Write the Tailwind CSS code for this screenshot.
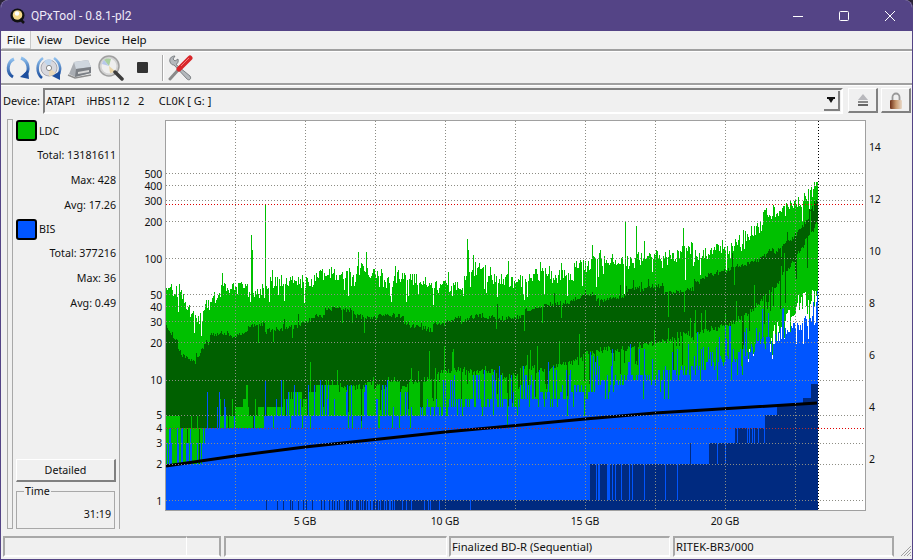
<!DOCTYPE html>
<html lang="en">
  <head>
    <meta charset="UTF-8" />
    <meta name="viewport" content="width=device-width, initial-scale=1.0" />
    <title>QPxTool</title>
    <script src="https://cdn.jsdelivr.net/npm/@tailwindcss/browser@4"></script>
  </head>
  <body class="bg-[#2b2438] overflow-hidden">
    <div class="w-[913px] h-[560px] flex flex-col bg-[#f0f0f0] rounded-t-lg overflow-hidden border-x border-b border-[#544486] font-['Noto_Sans',sans-serif] text-[11px] text-[#111] leading-none">
      <!-- title bar -->
      <div class="h-[31px] -mx-px shrink-0 bg-[#544486] flex items-center text-white">
        <svg class="ml-[10px] w-4 h-4" viewBox="0 0 16 16">
          <circle cx="7.500" cy="7.500" r="7" fill="#111" />
          <circle cx="7.500" cy="7" r="4.800" fill="#f6d98a" />
          <circle cx="7" cy="5.500" r="2.200" fill="#fff" />
          <path d="M10 11 L14 15" stroke="#111" stroke-width="2.500" />
        </svg>
        <span class="ml-[5px] text-[12px] font-['Roboto',sans-serif] text-[#efeaf7]">QPxTool - 0.8.1-pl2</span>
        <div class="ml-auto flex items-center">
          <svg class="w-3 h-3 mr-[33px]" viewBox="0 0 12 12"><path d="M0 6.500H10" stroke="#fff" /></svg>
          <svg class="w-3 h-3 mr-[34px]" viewBox="0 0 12 12"><rect x="1.500" y="1.500" width="9" height="9" rx="1" fill="none" stroke="#fff" /></svg>
          <svg class="w-3 h-3 mr-[17px]" viewBox="0 0 12 12"><path d="M1 1L11 11M11 1L1 11" stroke="#fff" /></svg>
        </div>
      </div>

      <!-- menu -->
      <div class="h-[20px] shrink-0 flex items-center border-b-2 border-[#a0a0a0] pl-px text-[11.500px]">
        <span class="h-[18px] w-[29px] flex items-center justify-center bg-[#f6f6f6] border-r border-b border-[#c8c8c8]">File</span>
        <span class="ml-[6px]">View</span>
        <span class="ml-[12px]">Device</span>
        <span class="ml-[12px]">Help</span>
      </div>

      <!-- toolbar -->
      <div class="h-[34px] shrink-0 flex items-center border-t border-white border-b-2 border-b-[#a0a0a0] pl-[4px]">
        <svg class="w-[26px] h-[26px]" viewBox="0 0 26 26">
          <defs>
            <linearGradient id="arc" x1="0" y1="0" x2="0" y2="1"><stop offset="0" stop-color="#8fc0ee" /><stop offset="1" stop-color="#1d4f9e" /></linearGradient>
          </defs>
          <path d="M9 4 C2 7 1 18 8 22" fill="none" stroke="url(#arc)" stroke-width="3" />
          <path d="M16 3 C24 6 25 16 20 20" fill="none" stroke="url(#arc)" stroke-width="3" />
          <path d="M15 22 L24 24 L23 15Z" fill="#1d4f9e" />
        </svg>
        <svg class="ml-[5px] w-[26px] h-[26px]" viewBox="0 0 26 26">
          <circle cx="13" cy="13" r="8" fill="#d8d8de" stroke="#a8a8b0" />
          <path d="M13 13L8 6A8 8 0 0 1 16 5Z" fill="#bfd6ee" />
          <path d="M13 13L20 18A8 8 0 0 1 13 21Z" fill="#e8d8b8" />
          <circle cx="13" cy="13" r="2.600" fill="#fff" stroke="#888" />
          <path d="M7 3 C0 8 0 18 6 23" fill="none" stroke="url(#arc)" stroke-width="2.600" />
          <path d="M18 3 C25 8 26 16 21 22" fill="none" stroke="url(#arc)" stroke-width="2.600" />
          <path d="M16 21 L24 25 L24 16Z" fill="#1d4f9e" />
        </svg>
        <svg class="ml-[5px] w-[26px] h-[26px]" viewBox="0 0 26 26">
          <path d="M2 19 L7 7 L21 5 L24 12 L24 18 L8 22Z" fill="#a9adb3" />
          <path d="M7 7 L21 5 L24 12 L9 14Z" fill="#cfd6de" />
          <path d="M9 14 L24 12 L24 18 L8 22Z" fill="#7a7e84" />
          <path d="M11 17 L22 15 L22 17 L11 19Z" fill="#d8d8d8" />
          <path d="M1 20 L8 23 L24 20" fill="none" stroke="#8d8d8d" stroke-width="1.500" />
        </svg>
        <svg class="ml-[5px] w-[26px] h-[26px]" viewBox="0 0 26 26">
          <circle cx="11" cy="11" r="10" fill="#d2d2d2" stroke="#a0a0a0" stroke-width="1.500" />
          <circle cx="11" cy="11" r="7.500" fill="#eeeeee" />
          <path d="M11 11L6 5A8 8 0 0 1 13 4Z" fill="#a9cf9f" />
          <path d="M11 11L4 9A8 8 0 0 1 6 5Z" fill="#b7c7ea" />
          <path d="M11 11L17 16A8 8 0 0 1 12 18Z" fill="#ead6a8" />
          <path d="M17 17L24 24" stroke="#3c3c3c" stroke-width="3.500" stroke-linecap="round" />
        </svg>
        <div class="ml-[13px] w-[11px] h-[11px] bg-[#333] rounded-[1px]"></div>
        <div class="ml-[14px] w-[2px] h-[26px] bg-[#a8a8a8] border-r border-white"></div>
        <svg class="ml-[3px] w-[26px] h-[26px]" viewBox="0 0 26 26">
          <path d="M3 7 C2 4 4 1 8 1 L6 4 L8 6 L11 4 C12 7 10 9 9 9.500 L23 21 C25 24 22 26 20 24 L7 10 C5 10 4 9 3 7Z" fill="#b4b8bc" stroke="#6a6e72" stroke-width="0.800" />
          <path d="M3 24 L12 14" stroke="#8a8a8a" stroke-width="3" stroke-linecap="round" />
          <path d="M12 14 L23 3" stroke="#d8262a" stroke-width="5" stroke-linecap="round" />
          <path d="M14 11 L22 3" stroke="#f47a7a" stroke-width="1" />
        </svg>
      </div>

      <!-- device row -->
      <div class="h-[33px] shrink-0 flex items-center border-t border-white pl-[2px] pb-[3px]">
        <span class="w-[40px]">Device:</span>
        <div class="w-[800px] h-[26px] flex items-center bg-[#f0f0f0] border-2 border-t-[#808080] border-l-[#808080] border-r-white border-b-white pl-[1px]">
          <span class="whitespace-pre">ATAPI    iHBS112   2     CL0K [ G: ]</span>
          <div class="ml-auto mr-px w-[16px] h-[20px] flex items-center justify-center bg-[#f0f0f0] border-r-2 border-b-2 border-[#808080]">
            <svg class="w-2 h-2" viewBox="0 0 8 8"><path d="M0 1H8V3H6.500L4 7L1.500 3H0Z" fill="#111" /></svg>
          </div>
        </div>
        <div class="ml-[5px] w-[30px] h-[25px] flex items-center justify-center bg-[#f0f0f0] border-t border-l border-white border-r-2 border-b-2 border-r-[#808080] border-b-[#808080]">
          <svg class="w-[12px] h-[14px]" viewBox="0 0 12 14"><path d="M6 1L11 7H1Z" fill="#b8b8bc" /><rect x="1" y="8" width="10" height="2" fill="#888" /><rect x="1" y="11" width="10" height="2" fill="#666" /></svg>
        </div>
        <div class="ml-[3px] w-[30px] h-[25px] flex items-center justify-center bg-[#f0f0f0] border-t border-l border-white border-r-2 border-b-2 border-r-[#808080] border-b-[#808080]">
          <svg class="w-[14px] h-[17px]" viewBox="0 0 14 17">
            <defs><linearGradient id="lock" x1="0" y1="0" x2="1" y2="0"><stop offset="0" stop-color="#6e3018" /><stop offset="0.500" stop-color="#c99a70" /><stop offset="1" stop-color="#e8d8c8" /></linearGradient></defs>
            <path d="M3.500 8V5A3.500 3.500 0 0 1 10.500 5V8" fill="none" stroke="#999" stroke-width="1.800" />
            <rect x="1" y="8" width="12" height="9" rx="1" fill="url(#lock)" />
          </svg>
        </div>
      </div>

      <!-- main -->
      <div class="flex-1 flex min-h-0 pt-[1px]">
        <div class="ml-[6px] mb-[7px] w-[6px] shrink-0 border-l border-b border-r border-[#a8a8a8] border-t"></div>
        <div class="mb-[7px] w-[107px] shrink-0 border-r border-[#a8a8a8] flex flex-col relative text-[10.700px]">
          <div class="h-[22px] ml-[3px] flex items-center gap-[2px]">
            <div class="w-[21px] h-[21px] rounded-[3px] border-2 border-black bg-[#00c000]"></div>
            <span class="mt-[2px]">LDC</span>
          </div>
          <div class="flex flex-col items-end pr-[3px]">
            <div class="h-[25px] mt-[2px] flex items-center">Total: 13181611</div>
            <div class="h-[25px] flex items-center">Max: 428</div>
            <div class="h-[25px] flex items-center">Avg: 17.26</div>
          </div>
          <div class="h-[22px] ml-[3px] flex items-center gap-[2px]">
            <div class="w-[21px] h-[21px] rounded-[3px] border-2 border-black bg-[#0055ff]"></div>
            <span>BIS</span>
          </div>
          <div class="flex flex-col items-end pr-[3px]">
            <div class="h-[25px] mt-[1px] flex items-center">Total: 377216</div>
            <div class="h-[25px] flex items-center">Max: 36</div>
            <div class="h-[25px] flex items-center">Avg: 0.49</div>
          </div>
          <div class="mt-auto ml-[3px] w-[100px] h-[23px] flex items-center justify-center border-t border-l border-white border-r-2 border-b-2 border-r-[#808080] border-b-[#808080]">Detailed</div>
          <div class="relative mt-[9px] ml-[3px] w-[99px] h-[38px] border border-[#a8a8a8] flex items-end justify-end pr-[3px] pb-[8px]">
            <span class="absolute left-[7px] -top-[6px] px-[1px] bg-[#f0f0f0]">Time</span>
            <span>31:19</span>
          </div>
        </div>
        <svg id="chart" class="shrink-0 -mt-[1px]" width="793" height="418" viewBox="120 118 793 418" shape-rendering="crispEdges"></svg>
      </div>

      <!-- status bar -->
      <div class="h-[21px] shrink-0 flex mb-[2px] ml-[2px] gap-[2px] relative text-[11.200px]">
        <div class="w-[184px] border-t-2 border-l-2 border-[#a8a8a8] border-r border-r-white border-b-2 border-b-white"></div>
        <div class="w-[34px] -ml-[2px] border-t-2 border-r-2 border-[#a8a8a8] border-b-2 border-b-white"></div>
        <div class="ml-[1px] w-[223px] border-t-2 border-l-2 border-r border-[#a8a8a8] border-r-white border-b-2 border-b-white"></div>
        <div class="w-[221px] flex items-center pl-[1px] border-t-2 border-l-2 border-r border-[#a8a8a8] border-r-white border-b-2 border-b-white">Finalized BD-R (Sequential)</div>
        <div class="ml-[1px] w-[221px] flex items-center pl-[1px] border-t-2 border-l-2 border-r-2 border-[#a8a8a8] border-b-2 border-b-white">RITEK-BR3/000</div>
        <svg class="absolute right-0 bottom-0 w-[14px] h-[14px]" viewBox="0 0 14 14"><path d="M13 3L3 13M13 6L6 13M13 9L9 13M13 12L12 13" stroke="#a0a0a0" /></svg>
      </div>
    </div>

    <script>
      const chart = document.getElementById("chart");
      const PLOT_L = 166, PLOT_R = 817;

      // small seeded generator so the trace is the same on every load
      let seed = 20731;
      function rnd() {
        seed = (seed * 16807) % 2147483647;
        return seed / 2147483647;
      }

      function lerp(pts, x) {
        for (let i = 1; i < pts.length; i++) {
          if (x <= pts[i][0]) {
            const t = (x - pts[i - 1][0]) / (pts[i][0] - pts[i - 1][0]);
            return pts[i - 1][1] + t * (pts[i][1] - pts[i - 1][1]);
          }
        }
        return pts[pts.length - 1][1];
      }

      // log scale of the LDC axis: y = 500 - 120 * log10(count)
      const toValue = (y) => Math.pow(10, (500 - y) / 120);
      const toY = (v) => (v < 1 ? 510 : Math.round(500 - 120 * Math.log10(v)));

      // noise that holds its value over a run of columns
      function blockNoise(minRun, maxRun, amp) {
        let left = 0, val = 0;
        return () => {
          if (left-- <= 0) {
            left = minRun + Math.floor(rnd() * (maxRun - minRun));
            val = (rnd() - 0.5) * amp;
          }
          return val;
        };
      }

      const lightTop = [[166,284],[180,288],[190,307],[200,316],[208,295],[235,292],[270,288],[300,280],[340,273],[400,278],[440,287],[480,273],[515,277],[585,267],[655,258],[700,253],[725,245],[760,222],[780,213],[800,198],[817,186]];
      const darkTop = [[166,327],[182,352],[195,360],[205,340],[235,335],[270,328],[300,323],[315,313],[340,314],[400,320],[440,330],[480,313],[515,317],[585,300],[655,290],[700,283],[725,273],[760,260],[780,247],[800,225],[817,203]];
      const darkBottom = [[166,415],[185,428],[205,425],[235,410],[270,405],[330,385],[400,384],[440,375],[515,373],[560,365],[585,357],[610,352],[655,343],[700,335],[740,318],[760,303],[780,283],[795,263],[817,227]];
      const lightBottom = [[742,365],[760,345],[780,325],[800,302],[817,292]];
      const blueTop = [[166,464],[204,464],[205,428],[262,428],[265,415],[420,415],[440,406],[500,404],[560,396],[600,385],[700,370],[750,350],[780,335],[800,325],[817,315]];
      const spikes = { 251: 235, 252: 250, 265: 205, 366: 252, 467: 239, 468: 250, 625: 222, 636: 226, 644: 241, 540: 262, 600: 250 };

      function dbLevel(x) {
        if (x < 264) return 510;
        if (x < 447) return rnd() < 0.1 + (x - 264) / 260 ? 500 : 510;
        if (x < 590) return rnd() < 0.985 ? 500 : 510;
        if (x < 616) return rnd() < 0.6 ? 464 : 500;
        if (x < 690) return rnd() < 0.96 ? 464 : 500;
        if (x < 715) return x > 708 || rnd() < 0.06 ? 443 : 464;
        if (x < 735) return rnd() < 0.95 ? 443 : 464;
        if (x < 765) return rnd() < 0.6 ? 428 : 443;
        if (x < 777) return 415;
        if (x < 803) return 405;
        if (x < 811) return 398;
        return 384;
      }

      const topBlock = blockNoise(4, 22, 12);
      const darkBlock = blockNoise(6, 30, 10);
      const botBlock = blockNoise(5, 24, 10);
      const layers = { lg: "", dg: "", bl: "", db: "" };
      for (let x = PLOT_L; x <= PLOT_R; x++) {
        const cx = x + 0.5;
        let top = lerp(lightTop, x) + topBlock() + (rnd() - 0.5) * 14;
        if (rnd() < 0.07) top += 8 + rnd() * 20;
        if (rnd() < 0.03 && x < 740) top -= 6 + rnd() * 12;
        if (spikes[x]) top = spikes[x];
        top = Math.max(top, 182);

        let dTop = lerp(darkTop, x) + darkBlock() + (rnd() - 0.5) * 5;
        if (rnd() < 0.04) dTop += rnd() * 24;
        if (rnd() < 0.03) dTop -= rnd() * 14;

        let dBot = lerp(darkBottom, x) + botBlock() + (rnd() - 0.5) * 6;
        if (rnd() < 0.12) dBot += 6 + rnd() * 28;
        if (rnd() < 0.08) dBot -= 4 + rnd() * 22;
        if (x < 340) dBot = toY(Math.round(toValue(dBot)));

        // BIS counts are small, so the tops sit on whole-number steps
        const jitter = x < 420 ? 0.06 : 0.13;
        let v = toValue(lerp(blueTop, x)) * (1 - jitter + rnd() * jitter * 2);
        const u = rnd();
        if (u < (x < 205 ? 0.4 : x < 265 ? 0.12 : 0.2)) v *= 1.25 + rnd() * 0.7;
        else if (u > 0.93 && x > 265) v *= 0.75;
        const bTop = toY(Math.round(v));

        let lgBot = bTop;
        if (x >= 742) {
          lgBot = lerp(lightBottom, x) + (rnd() - 0.5) * 18;
          if (rnd() < 0.3) lgBot += rnd() * 45;
          lgBot = Math.min(lgBot, bTop);
        }

        layers.lg += `M${cx} ${top.toFixed(0)}V${lgBot.toFixed(0)}`;
        layers.dg += `M${cx} ${dTop.toFixed(0)}V${dBot.toFixed(0)}`;
        layers.bl += `M${cx} ${bTop}V510`;
        const lvl = dbLevel(x);
        if (lvl < 510) layers.db += `M${cx} ${lvl}V510`;
      }

      let svg = `<rect x="165.500" y="120.500" width="700" height="390" fill="#fff" stroke="#a0a0a0" />`;
      svg += `<path d="${layers.lg}" stroke="#00c000" fill="none" />`;
      svg += `<path d="${layers.dg}" stroke="#006000" fill="none" />`;
      svg += `<path d="${layers.bl}" stroke="#0055ff" fill="none" />`;
      svg += `<path d="${layers.db}" stroke="#002a80" fill="none" />`;

      // speed curve
      svg += `<path d="M166 466L235 456L305 447L445 432L585 419L655 413L720 409L817 403" stroke="#000" stroke-width="3" fill="none" shape-rendering="auto" />`;

      // grid
      [500, 464, 443, 415, 380, 342, 321, 306, 294, 258, 221, 200, 185, 173].forEach((y) => {
        svg += `<path d="M166 ${y + 0.5}H865" stroke="#8c8c84" stroke-dasharray="1 2" />`;
      });
      svg += `<path d="M166 428.500H818" stroke="#b03030" stroke-dasharray="1 2" />`;
      svg += `<path d="M818 428.500H865" stroke="#e00000" stroke-dasharray="1 2" />`;
      svg += `<path d="M166 204.500H865" stroke="#e00000" stroke-dasharray="1 2" />`;
      [235, 305, 375, 445, 515, 585, 655, 725, 795].forEach((x) => {
        svg += `<path d="M${x + 0.5} 121V510" stroke="#8c8c84" stroke-dasharray="1 2" />`;
      });
      svg += `<path d="M818.500 121V510" stroke="#000" stroke-dasharray="1 2" />`;
      svg += `<rect x="165.500" y="120.500" width="700" height="390" fill="none" stroke="#a0a0a0" />`;

      // axis labels
      const txt = 'font-family="Noto Sans, sans-serif" font-size="10.500" letter-spacing="-0.15" fill="#111"';
      [[1,501],[2,464],[3,443],[4,428],[5,415],[10,380],[20,343],[30,322],[40,307],[50,295],[100,259],[200,222],[300,201],[400,186],[500,174]].forEach(([v, y]) => {
        svg += `<text x="162" y="${y + 4}" text-anchor="end" ${txt}>${v}</text>`;
      });
      [[14,147],[12,199],[10,251],[8,303],[6,355],[4,407],[2,459]].forEach(([v, y]) => {
        svg += `<text x="869" y="${y + 4}" ${txt}>${v}</text>`;
      });
      [[5,305],[10,445],[15,585],[20,725]].forEach(([v, x]) => {
        svg += `<text x="${x}" y="525" text-anchor="middle" ${txt}>${v} GB</text>`;
      });

      chart.innerHTML = svg;
    </script>
  </body>
</html>
